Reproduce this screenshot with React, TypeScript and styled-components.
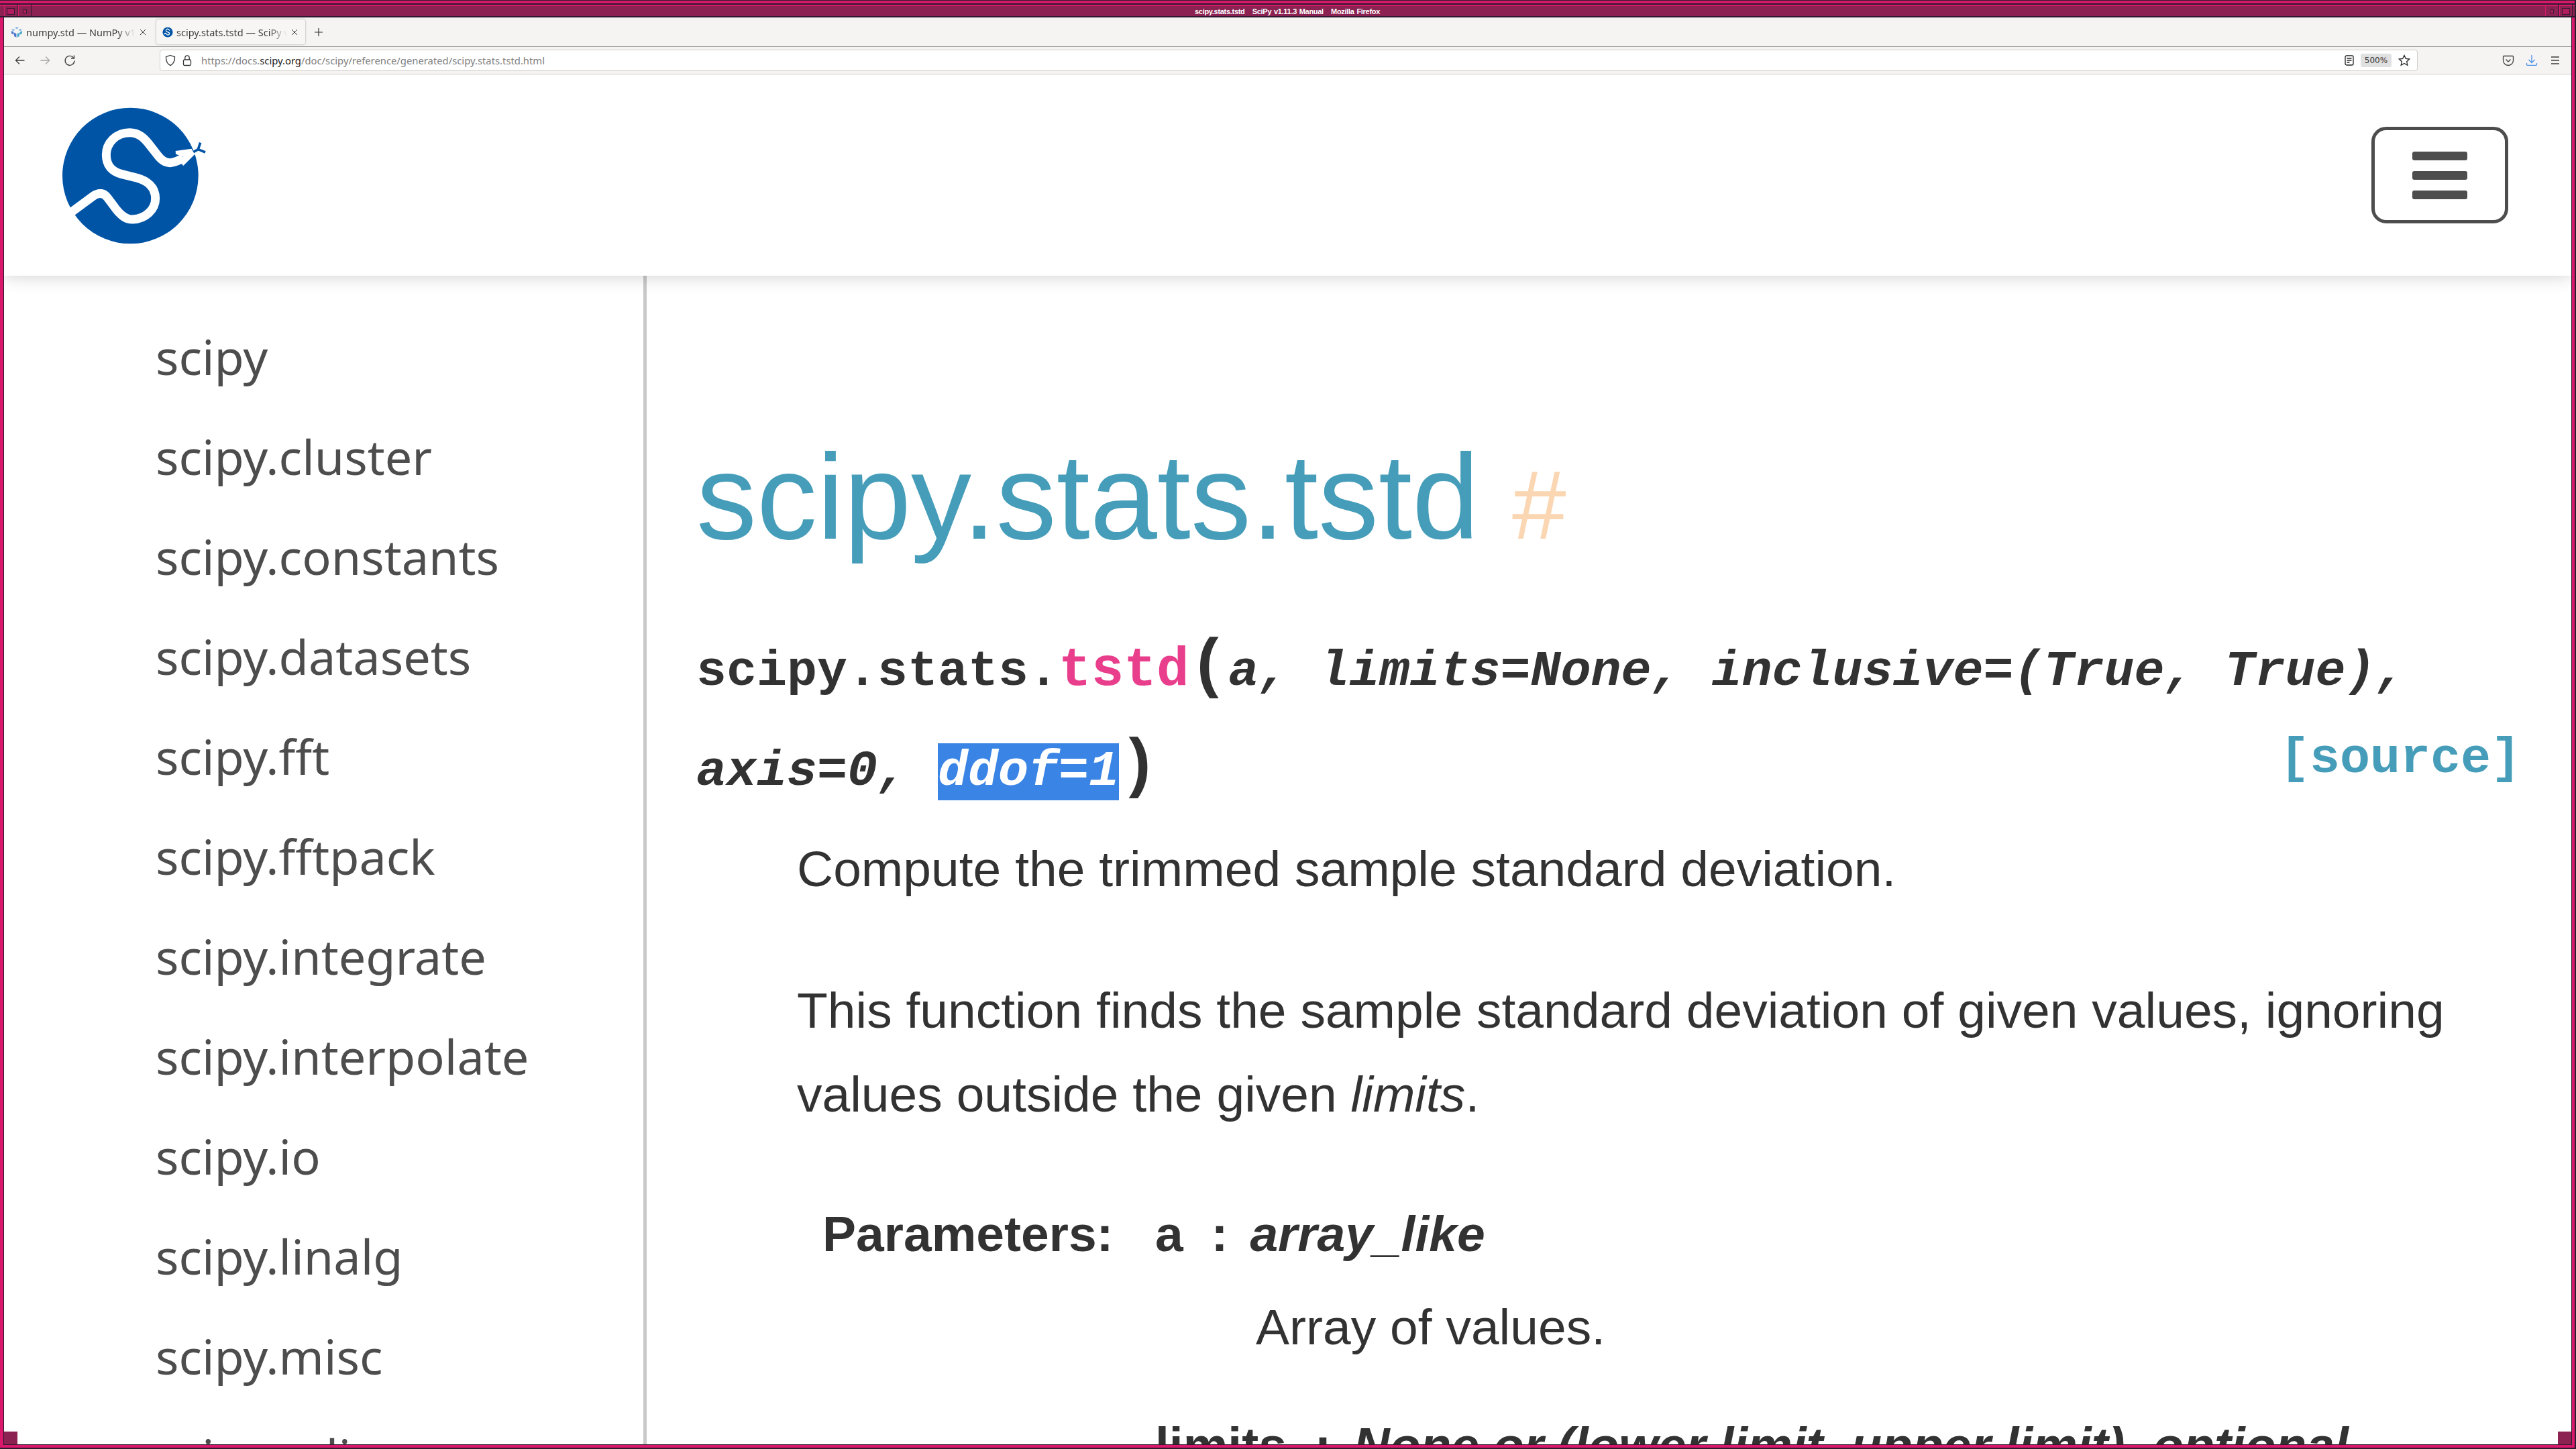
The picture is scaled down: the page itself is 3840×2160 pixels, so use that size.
import React from "react";
import styled, { createGlobalStyle } from "styled-components";

const GlobalStyle = createGlobalStyle`
  html, body {
    margin: 0;
    padding: 0;
    background: #fff;
  }
  #root {
    width: 3840px;
    height: 2160px;
    overflow: hidden;
  }
`;

const WindowFrame = styled.div`
  width: 3840px;
  height: 2160px;
  box-sizing: border-box;
  display: flex;
  flex-direction: column;
  overflow: hidden;
  background: #d9186c;
  border-style: solid;
  border-color: #2e1a2e;
  border-width: 1px 2px 2px 0;
`;

const TitleBar = styled.div`
  height: 21px;
  margin-top: 4px;
  flex: none;
  box-sizing: border-box;
  display: flex;
  align-items: center;
  background: #8c2252;
  border-top: 2px solid #2e1a2e;
  border-bottom: 2px solid #2e1a2e;
  box-shadow: inset 0 2px 0 #d9186c;
`;

const TitleButtons = styled.div`
  display: flex;
  flex: none;
  gap: 1px;
  height: 100%;
  margin: 0 3px 0 6px;
`;

const TitleButton = styled.div<{ $inner: number }>`
  width: 18px;
  display: flex;
  align-items: center;
  justify-content: center;
  border-left: 1px solid #d9186c;
  border-right: 1px solid #2e1a2e;
  padding-top: 2px;
  &::after {
    content: "";
    width: ${(p) => p.$inner}px;
    height: ${(p) => (p.$inner > 6 ? p.$inner - 2 : p.$inner)}px;
    border: 1px solid #3a1a32;
    background: #b01c5e;
  }
`;

const TitleText = styled.div`
  flex: 1;
  text-align: center;
  padding-top: 2px;
  color: #fff;
  font: bold 11px "Liberation Sans", sans-serif;
  letter-spacing: -0.3px;
  word-spacing: 1px;
  white-space: pre;
`;

const WindowInner = styled.div`
  flex: 1;
  min-height: 0;
  margin: 0 4px 4px 5px;
  border-bottom: 1px solid #2e1a2e;
  border-left: 1px solid #2e1a2e;
  border-right: 1px solid #2e1a2e;
  display: flex;
  flex-direction: column;
  background: #fff;
  overflow: hidden;
  position: relative;
`;

const ResizeCorner = styled.div<{ $side: "left" | "right" }>`
  position: absolute;
  bottom: 0;
  ${(p) => p.$side}: 0;
  width: 20px;
  height: 19px;
  background: #8c2252;
`;

const TabStrip = styled.div`
  height: 44px;
  flex: none;
  box-sizing: border-box;
  background: #f5f4f2;
  border-bottom: 1px solid #999;
  display: flex;
  align-items: center;
  padding-left: 1px;
  gap: 4px;
`;

const Tab = styled.div<{ $active?: boolean }>`
  width: 222px;
  height: 37px;
  box-sizing: border-box;
  padding: 0 10px 0 9px;
  display: flex;
  align-items: center;
  gap: 5px;
  border-radius: 4px;
  background: ${(p) => (p.$active ? "#f7f6f4" : "transparent")};
  box-shadow: ${(p) => (p.$active ? "0 0 3px rgba(0,0,0,.35)" : "none")};
`;

const TabLabel = styled.span`
  flex: 1;
  min-width: 0;
  overflow: hidden;
  white-space: nowrap;
  font: 14.5px "Noto Sans", sans-serif;
  color: #3d3d3d;
  -webkit-mask-image: linear-gradient(to right, #000 84%, transparent 100%);
  mask-image: linear-gradient(to right, #000 84%, transparent 100%);
`;

const TabClose = styled.span`
  flex: none;
  width: 12px;
  display: flex;
  color: #333;
`;

const NewTab = styled.div`
  width: 22px;
  margin-left: 8px;
  display: flex;
  color: #333;
`;

const NavBar = styled.div`
  height: 41px;
  flex: none;
  box-sizing: border-box;
  background: #f5f4f2;
  border-bottom: 1px solid #cfcdc8;
  display: flex;
  align-items: center;
  padding: 0 15px 1px 15px;
`;

const NavButton = styled.div<{ $muted?: boolean; $blue?: boolean }>`
  width: 18px;
  height: 18px;
  flex: none;
  display: flex;
  color: ${(p) => (p.$blue ? "#4a90e8" : p.$muted ? "#a3a3a3" : "#3d3d3d")};
`;

const NavGroup = styled.div`
  display: flex;
  gap: 19px;
  width: 217px;
  flex: none;
`;

const UrlBar = styled.div`
  width: 3366px;
  height: 32px;
  flex: none;
  box-sizing: border-box;
  background: #fff;
  border: 1px solid #cfcdc8;
  border-radius: 4px;
  display: flex;
  align-items: center;
  padding: 0 10px 0 7px;
  gap: 10px;
`;

const UrlText = styled.div`
  flex: 1;
  margin-left: 4px;
  font: 14.8px "Noto Sans", sans-serif;
  color: #808080;
  white-space: nowrap;
  b {
    font-weight: 400;
    color: #222;
  }
`;

const ZoomChip = styled.div`
  width: 46px;
  height: 20px;
  border-radius: 3px;
  background: #e0e0e0;
  color: #333;
  font: 12px "DejaVu Sans", sans-serif;
  display: flex;
  align-items: center;
  justify-content: center;
`;

const NavRight = styled.div`
  flex: 1;
  display: flex;
  justify-content: flex-end;
  gap: 17px;
`;

const Page = styled.div`
  flex: 1;
  min-height: 0;
  display: flex;
  flex-direction: column;
  background: #fff;
  overflow: hidden;
`;

const Header = styled.header`
  height: 300px;
  flex: none;
  box-sizing: border-box;
  display: flex;
  align-items: center;
  justify-content: space-between;
  padding: 0 94px 0 54px;
  box-shadow: 0 0 25px rgba(0, 0, 0, 0.2);
  position: relative;
`;

const MenuButton = styled.button`
  width: 204px;
  height: 144px;
  box-sizing: border-box;
  background: none;
  border: 5px solid #4d4d4d;
  border-radius: 22px;
  display: flex;
  flex-direction: column;
  align-items: center;
  justify-content: center;
  gap: 16px;
  padding: 0;
`;

const MenuBar = styled.span`
  width: 82px;
  height: 13px;
  border-radius: 3px;
  background: #4d4d4d;
`;

const Body = styled.div`
  flex: 1;
  min-height: 0;
  display: flex;
`;

const Sidebar = styled.nav`
  width: 958px;
  flex: none;
  box-sizing: border-box;
  border-right: 5px solid #c9c9c9;
  padding: 45px 0 0 226px;
  overflow: hidden;
`;

const SideLink = styled.div`
  height: 149px;
  display: flex;
  align-items: center;
  font: 72px "Noto Sans", sans-serif;
  color: #4d4d4d;
`;

const Main = styled.main`
  flex: 1;
  min-width: 0;
  box-sizing: border-box;
  padding: 0 75px 0 74px;
  font: 75px "Liberation Sans", sans-serif;
  color: #323232;
  overflow: hidden;
`;

const Title = styled.h1`
  margin: 210px 0 59px;
  height: 240px;
  font: 400 180px/240px "Liberation Sans", sans-serif;
  color: #459db9;
  white-space: nowrap;
`;

const HeaderLink = styled.span`
  margin-left: 49px;
  font-size: 145px;
  color: #fbd6b3;
`;

const Signature = styled.dl`
  margin: 0;
  font: bold 75px "Liberation Mono", monospace;
`;

const SigLine = styled.div`
  height: 149px;
  display: flex;
  align-items: center;
  justify-content: space-between;
  white-space: pre;
`;

const SigName = styled.span`
  font-size: 81px;
  color: #e83e8c;
`;

const SigParen = styled.span`
  font-size: 98px;
`;

const SigParams = styled.em`
  font-style: italic;
`;

const Selected = styled.span`
  background: #3a84e5;
  color: #fff;
`;

const SourceLink = styled.span`
  color: #459db9;
  margin-bottom: 24px;
`;

const Description = styled.div`
  padding: 15px 0 0 150px;
  p {
    margin: 0;
    line-height: 125px;
  }
  p + p {
    margin-top: 86px;
  }
`;

const FieldList = styled.div`
  margin-top: 83px;
  margin-left: 38px;
  display: grid;
  grid-template-columns: 496px 1fr;
`;

const FieldName = styled.div`
  font-weight: bold;
  line-height: 125px;
`;

const FieldBody = styled.div`
  line-height: 125px;
`;

const ParamHead = styled.div`
  font-weight: bold;
  white-space: pre;
  em {
    font-style: italic;
    margin-left: 33px;
  }
`;

const ParamText = styled.div`
  padding-left: 150px;
  margin-top: 14px;
  margin-bottom: 51px;
`;

const NumpyIcon = () => (
  <svg width="18" height="18" viewBox="0 0 18 18">
    <path d="M9 1l3 1.6-3 1.6-3-1.6zM3.6 4l3 1.6-3 1.6L1 5.6zM14.4 4L17 5.6l-3 1.6-2.6-1.6z" fill="#8ab8e6" />
    <path d="M1 7l3.4 1.8v4L1 11zM5 9.4l3.4 1.8v5.6L5 15z" fill="#4d77cf" />
    <path d="M17 7l-3.4 1.8v4L17 11zM13 9.4l-3.4 1.8v5.6L13 15z" fill="#4dabcf" />
  </svg>
);

const ScipyFavicon = () => (
  <svg width="16" height="18" viewBox="0 0 16 18">
    <circle cx="8" cy="9" r="7.6" fill="#0054a6" />
    <path d="M2.5 12l2-1.400c1-.6 1.600 1.400 2.800 2.200 2 1 4-.8 3-2.800-.8-1.400-4-1-4.800-3-.6-2 2-3.800 3.600-2.400l2 2" fill="none" stroke="#fff" strokeWidth="1.300" />
  </svg>
);

const CloseGlyph = () => (
  <svg width="12" height="12" viewBox="0 0 12 12" fill="none" stroke="currentColor" strokeWidth="1">
    <path d="M2 2l8 8M10 2l-8 8" />
  </svg>
);

const PlusGlyph = () => (
  <svg width="16" height="16" viewBox="0 0 16 16" fill="none" stroke="currentColor" strokeWidth="1.200">
    <path d="M8 2v12M2 8h12" />
  </svg>
);

const BackIcon = () => (
  <svg width="18" height="18" viewBox="0 0 18 18" fill="none" stroke="currentColor" strokeWidth="1.300">
    <path d="M15.500 9H3M8 3.500L2.500 9 8 14.500" />
  </svg>
);

const ForwardIcon = () => (
  <svg width="18" height="18" viewBox="0 0 18 18" fill="none" stroke="currentColor" strokeWidth="1.300">
    <path d="M2.500 9H15M10 3.500L15.500 9 10 14.500" />
  </svg>
);

const ReloadIcon = () => (
  <svg width="18" height="18" viewBox="0 0 18 18" fill="none" stroke="currentColor" strokeWidth="1.400">
    <path d="M14.500 5A7 7 0 1 0 16 9.500" />
    <path d="M15.500 1.500V6H11" />
  </svg>
);

const ShieldIcon = () => (
  <svg width="16" height="18" viewBox="0 0 16 18" fill="none" stroke="#333" strokeWidth="1.300">
    <path d="M8 1.500l6.500 2.200c.2 6-1.600 10.500-6.500 13-4.900-2.500-6.700-7-6.500-13z" />
  </svg>
);

const LockIcon = () => (
  <svg width="14" height="18" viewBox="0 0 14 18" fill="none" stroke="#333" strokeWidth="1.300">
    <rect x="1.500" y="8" width="11" height="8.500" rx="1.500" />
    <path d="M3.800 8V5a3.200 3.200 0 0 1 6.400 0v3" />
  </svg>
);

const ReaderIcon = () => (
  <svg width="14" height="18" viewBox="0 0 14 18" fill="none" stroke="#222" strokeWidth="1.300">
    <rect x="1" y="2" width="12" height="14" rx="2" />
    <path d="M3.500 6h7M3.500 9h7M3.500 12h4" />
  </svg>
);

const StarIcon = () => (
  <svg width="18" height="18" viewBox="0 0 18 18" fill="none" stroke="#222" strokeWidth="1.300">
    <path d="M9 1.500l2.300 5 5.400.6-4 3.700 1.100 5.400L9 13.500l-4.800 2.700 1.100-5.400-4-3.700 5.400-.6z" />
  </svg>
);

const PocketIcon = () => (
  <svg width="18" height="18" viewBox="0 0 18 18" fill="none" stroke="currentColor" strokeWidth="1.300">
    <path d="M2.500 2.500h13c.6 0 1 .4 1 1V9a7.500 7.500 0 0 1-15 0V3.500c0-.6.4-1 1-1z" />
    <path d="M5.500 7.500L9 11l3.500-3.500" />
  </svg>
);

const DownloadIcon = () => (
  <svg width="18" height="18" viewBox="0 0 18 18" fill="none" stroke="currentColor" strokeWidth="1.300">
    <path d="M9 1v11M4.500 8L9 12.500 13.500 8" />
    <path d="M1.500 13v2c0 .8.500 1.300 1.300 1.300h12.400c.8 0 1.300-.5 1.300-1.300v-2" />
  </svg>
);

const HamburgerIcon = () => (
  <svg width="18" height="18" viewBox="0 0 18 18" fill="none" stroke="currentColor" strokeWidth="1.400">
    <path d="M3 4h12M3 9h12M3 14h12" />
  </svg>
);

const ScipyLogo = () => (
  <svg width="300" height="260" viewBox="0 0 900 780">
    <circle cx="403" cy="393" r="304" fill="#0054a6" />
    <path
      d="M120 570L235 485C262 465 285 470 300 490L330 530C360 572 385 590 415 588C470 585 515 545 515 495C515 445 480 415 430 402L365 386C320 375 295 345 295 300C295 245 340 200 400 200C440 200 465 225 485 250L520 295C545 330 570 345 610 328L640 315"
      fill="none"
      stroke="#fff"
      strokeWidth="39"
    />
    <path d="M605 282L676 272L692 296L640 348L622 330L640 308L606 296Z" fill="#fff" />
    <path d="M685 287L706 275L716 245M706 275L738 288" fill="none" stroke="#0054a6" strokeWidth="11" />
  </svg>
);

const modules = [
  "scipy",
  "scipy.cluster",
  "scipy.constants",
  "scipy.datasets",
  "scipy.fft",
  "scipy.fftpack",
  "scipy.integrate",
  "scipy.interpolate",
  "scipy.io",
  "scipy.linalg",
  "scipy.misc",
  "scipy.ndimage",
];

export default function App() {
  return (
    <>
      <GlobalStyle />
      <WindowFrame>
        <TitleBar>
          <TitleButtons>
            <TitleButton $inner={10} />
            <TitleButton $inner={4} />
          </TitleButtons>
          <TitleText>scipy.stats.tstd   SciPy v1.11.3 Manual   Mozilla Firefox</TitleText>
          <TitleButtons>
            <TitleButton $inner={4} />
            <TitleButton $inner={10} />
          </TitleButtons>
        </TitleBar>
        <WindowInner>
          <TabStrip>
            <Tab>
              <NumpyIcon />
              <TabLabel>numpy.std — NumPy v1.26 Manual</TabLabel>
              <TabClose><CloseGlyph /></TabClose>
            </Tab>
            <Tab $active>
              <ScipyFavicon />
              <TabLabel>scipy.stats.tstd — SciPy v1.11.3 Manual</TabLabel>
              <TabClose><CloseGlyph /></TabClose>
            </Tab>
            <NewTab><PlusGlyph /></NewTab>
          </TabStrip>
          <NavBar>
            <NavGroup>
              <NavButton><BackIcon /></NavButton>
              <NavButton $muted><ForwardIcon /></NavButton>
              <NavButton><ReloadIcon /></NavButton>
            </NavGroup>
            <UrlBar>
              <ShieldIcon />
              <LockIcon />
              <UrlText>
                https://docs.<b>scipy.org</b>/doc/scipy/reference/generated/scipy.stats.tstd.html
              </UrlText>
              <ReaderIcon />
              <ZoomChip>500%</ZoomChip>
              <StarIcon />
            </UrlBar>
            <NavRight>
              <NavButton><PocketIcon /></NavButton>
              <NavButton $blue><DownloadIcon /></NavButton>
              <NavButton><HamburgerIcon /></NavButton>
            </NavRight>
          </NavBar>
          <Page>
            <Header>
              <ScipyLogo />
              <MenuButton>
                <MenuBar />
                <MenuBar />
                <MenuBar />
              </MenuButton>
            </Header>
            <Body>
              <Sidebar>
                {modules.map((name) => (
                  <SideLink key={name}>{name}</SideLink>
                ))}
              </Sidebar>
              <Main>
                <Title>
                  scipy.stats.tstd<HeaderLink>#</HeaderLink>
                </Title>
                <Signature>
                  <SigLine>
                    <span>
                      scipy.stats.<SigName>tstd</SigName>
                      <SigParen>(</SigParen>
                      <SigParams>a, limits=None, inclusive=(True, True),</SigParams>
                    </span>
                  </SigLine>
                  <SigLine>
                    <span>
                      <SigParams>axis=0, <Selected>ddof=1</Selected></SigParams>
                      <SigParen>)</SigParen>
                    </span>
                    <SourceLink>[source]</SourceLink>
                  </SigLine>
                </Signature>
                <Description>
                  <p>Compute the trimmed sample standard deviation.</p>
                  <p>
                    This function finds the sample standard deviation of given values, ignoring
                    <br />
                    values outside the given <em>limits</em>.
                  </p>
                  <FieldList>
                    <FieldName>Parameters:</FieldName>
                    <FieldBody>
                      <ParamHead>a  :<em>array_like</em></ParamHead>
                      <ParamText>Array of values.</ParamText>
                      <ParamHead>limits  :<em>None or (lower limit, upper limit), optional</em></ParamHead>
                    </FieldBody>
                  </FieldList>
                </Description>
              </Main>
            </Body>
          </Page>
          <ResizeCorner $side="left" />
          <ResizeCorner $side="right" />
        </WindowInner>
      </WindowFrame>
    </>
  );
}
